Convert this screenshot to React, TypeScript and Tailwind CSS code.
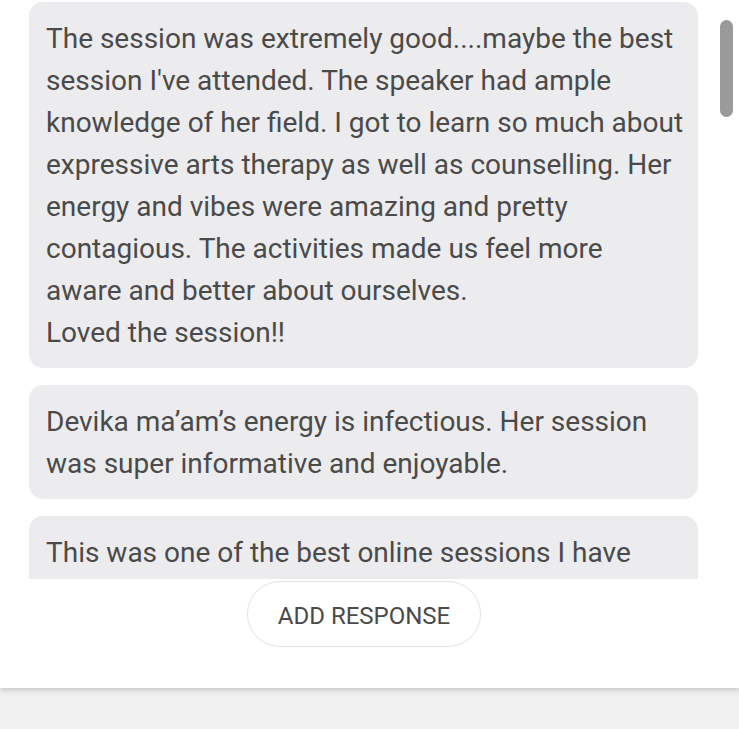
const responses = [
  "The session was extremely good....maybe the best session I've attended. The speaker had ample knowledge of her field. I got to learn so much about expressive arts therapy as well as counselling. Her energy and vibes were amazing and pretty contagious. The activities made us feel more aware and better about ourselves.\nLoved the session!!",
  "Devika ma’am’s energy is infectious. Her session was super informative and enjoyable.",
  "This was one of the best online sessions I have attended in a long time. Thank you so much!",
];

export default function App() {
  return (
    <div className="flex h-[729px] w-[739px] flex-col bg-[#f0f0f0] font-['Roboto',sans-serif]">
      <div className="flex h-[688px] flex-col bg-white shadow-[0_2px_5px_rgba(0,0,0,0.18)]">
        {/* List */}
        <div className="flex h-[579px] overflow-hidden">
          <div className="flex flex-1 flex-col gap-[17px] pl-[29px] pt-[2px]">
            {responses.map((text, i) => (
              <div
                key={i}
                className="shrink-0 whitespace-pre-line rounded-[14px] bg-[#ececee] pl-[17px] pr-[14px] pb-[14px] pt-[16px] text-[28px] leading-[42px] text-[#4a4a4a]"
              >
                {text}
              </div>
            ))}
          </div>
          <div className="w-[41px] shrink-0 pl-[22px] pt-[20px]">
            <div className="h-[97px] w-[13px] rounded-full bg-[#9a9a9a]" />
          </div>
        </div>

        {/* Action */}
        <div className="flex justify-center pr-[11px] pt-[2px]">
          <button className="h-[66px] w-[234px] rounded-full border border-[#e2e2e2] bg-white pt-[3px] text-[24px] text-[#4a4a4a]">
            ADD RESPONSE
          </button>
        </div>
      </div>
    </div>
  );
}
